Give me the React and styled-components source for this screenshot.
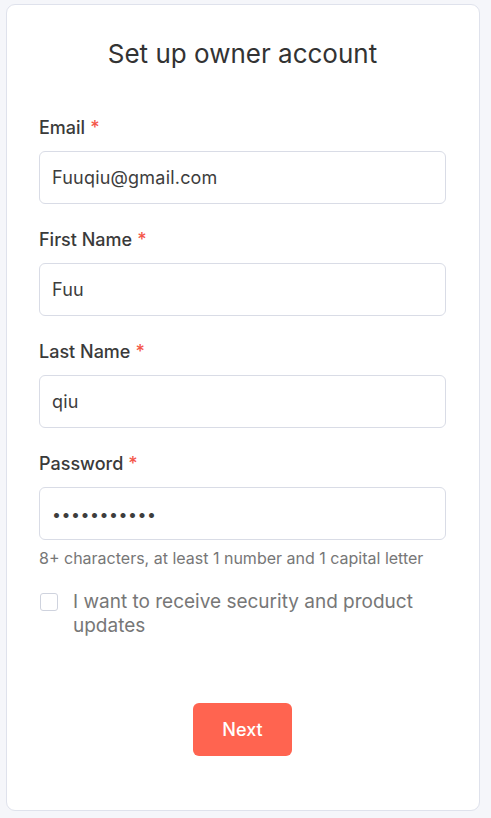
import React, { useState } from 'react';
import styled, { createGlobalStyle } from 'styled-components';

const GlobalStyle = createGlobalStyle`
  html, body {
    margin: 0;
    padding: 0;
    background: #f5f6fa;
    font-family: Inter, "Liberation Sans", sans-serif;
  }
`;

const Page = styled.div`
  padding: 4px 12px 8px 6px;
  box-sizing: border-box;
  min-height: 818px;
`;

const Card = styled.form`
  width: 474px;
  height: 807px;
  box-sizing: border-box;
  background: #fff;
  border: 1px solid #dfe2ec;
  border-radius: 9px;
  padding: 32px 33px 0 32px;
  display: flex;
  flex-direction: column;
`;

const Title = styled.h1`
  margin: 0 0 46px;
  font-size: 26px;
  font-weight: 400;
  color: #333;
  text-align: center;
  line-height: 34px;
`;

const Field = styled.div`
  display: flex;
  flex-direction: column;
  margin-bottom: 25px;
`;

const Label = styled.label`
  font-size: 18px;
  font-weight: 500;
  color: #3a3a3a;
  line-height: 22px;
  margin-bottom: 12px;
`;

const Star = styled.span`
  color: #f4574a;
  margin-left: 5px;
`;

const Input = styled.input`
  height: 53px;
  box-sizing: border-box;
  border: 1px solid #d9dce6;
  border-radius: 6px;
  padding: 0 12px;
  font-family: inherit;
  font-size: ${(p) => (p.type === 'password' ? '16px' : '18px')};
  letter-spacing: ${(p) => (p.type === 'password' ? '0.5px' : '0.2px')};
  color: #3d3d3d;
  outline: none;
  background: #fff;
`;

const Hint = styled.p`
  margin: -17px 0 0;
  font-size: 16px;
  color: #777;
  line-height: 20px;
`;

const CheckRow = styled.label`
  display: flex;
  gap: 15px;
  margin-top: 22px;
  font-size: 19px;
  color: #777;
  line-height: 24px;
`;

const Box = styled.input`
  appearance: none;
  width: 18px;
  height: 18px;
  flex-shrink: 0;
  margin: 3px 0 0 1px;
  border: 1px solid #cfd3de;
  border-radius: 3px;
  background: #fff;
`;

const Actions = styled.div`
  display: flex;
  justify-content: center;
  margin-top: 65px;
`;

const Button = styled.button`
  width: 99px;
  height: 53px;
  border: none;
  border-radius: 6px;
  background: #ff6450;
  color: #fff;
  font-family: inherit;
  font-size: 18px;
  font-weight: 500;
`;

const fields = [
  { key: 'email', label: 'Email', value: 'Fuuqiu@gmail.com', type: 'text' },
  { key: 'first', label: 'First Name', value: 'Fuu', type: 'text' },
  { key: 'last', label: 'Last Name', value: 'qiu', type: 'text' },
  { key: 'password', label: 'Password', value: 'Fuuqiu12345', type: 'password' },
];

const App = () => {
  const [values, setValues] = useState(
    Object.fromEntries(fields.map((f) => [f.key, f.value]))
  );

  return (
    <Page>
      <GlobalStyle />
      <Card onSubmit={(e) => e.preventDefault()}>
        <Title>Set up owner account</Title>
        {fields.map((f) => (
          <Field key={f.key}>
            <Label>
              {f.label}
              <Star>*</Star>
            </Label>
            <Input
              type={f.type}
              value={values[f.key]}
              onChange={(e) => setValues({ ...values, [f.key]: e.target.value })}
            />
          </Field>
        ))}
        <Hint>8+ characters, at least 1 number and 1 capital letter</Hint>
        <CheckRow>
          <Box type="checkbox" />
          <span>I want to receive security and product updates</span>
        </CheckRow>
        <Actions>
          <Button type="submit">Next</Button>
        </Actions>
      </Card>
    </Page>
  );
};

export default App;
